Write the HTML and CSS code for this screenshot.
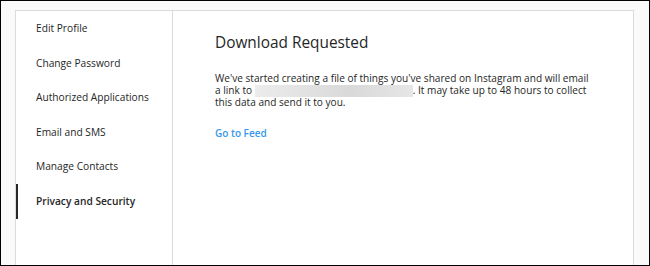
FILE: index.html
```html
<!DOCTYPE html>
<html>
<head>
<meta charset="utf-8">
<link rel="stylesheet" href="styles.css">
</head>
<body>
<div class="card">
  <nav class="side">
    <a class="item">Edit Profile</a>
    <a class="item">Change Password</a>
    <a class="item">Authorized Applications</a>
    <a class="item">Email and SMS</a>
    <a class="item">Manage Contacts</a>
    <a class="item active">Privacy and Security</a>
  </nav>
  <main class="main">
    <h1 class="title">Download Requested</h1>
    <p class="text">We've started creating a file of things you've shared on Instagram and will email a link to <span class="redact"></span>. It may take up to 48 hours to collect this data and send it to you.</p>
    <a class="link">Go to Feed</a>
  </main>
</div>
<div class="frame"></div>
</body>
</html>
```
FILE: styles.css
```css
html, body {
  margin: 0;
  height: 100%;
  overflow: hidden;
}
body {
  background: #fafafa;
  font-family: "Open Sans", "Noto Sans", sans-serif;
  color: #262626;
  position: relative;
}
.frame {
  position: absolute;
  inset: 0;
  border: 1px solid #000;
  pointer-events: none;
}
.card {
  margin: 10px 0 0 15px;
  width: 617px;
  height: 255px;
  border: 1px solid #dbdbdb;
  border-bottom: none;
  background: #fff;
  display: flex;
}
.side {
  width: 156px;
  border-right: 1px solid #dbdbdb;
  display: flex;
  flex-direction: column;
}
.item {
  display: block;
  height: 34.6px;
  line-height: 34.6px;
  padding-left: 20px;
  font-size: 10.2px;
  white-space: nowrap;
}
.item.active {
  border-left: 2px solid #262626;
  padding-left: 18px;
  font-weight: 600;
}
.main {
  flex: 1;
  padding: 22px 0 0 42px;
}
.title {
  margin: 0;
  font-size: 15.4px;
  font-weight: 400;
  line-height: 20px;
}
.text {
  margin: 20px 0 0;
  width: 380px;
  font-size: 10.1px;
  line-height: 11.6px;
}
.redact {
  display: inline-block;
  width: 158px;
  height: 12px;
  vertical-align: -3px;
  background: linear-gradient(90deg, #ececec, #d9d9d9 60%, #e6e6e6);
}
.link {
  display: block;
  margin-top: 18px;
  color: #3897f0;
  font-weight: 600;
  font-size: 10px;
}
```
